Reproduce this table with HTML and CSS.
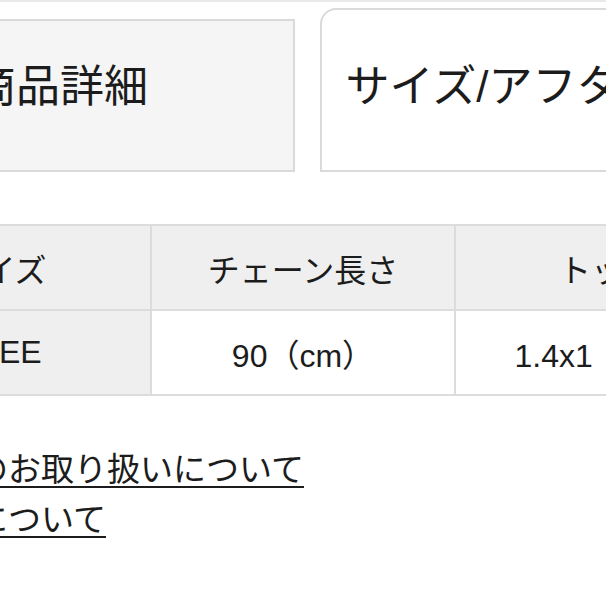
FILE: index.html
```html
<!DOCTYPE html>
<html lang="ja">
<head>
<meta charset="utf-8">
<title>サイズ/アフターケア</title>
<link rel="stylesheet" href="styles.css">
</head>
<body>
<div class="page">
  <div class="tabs">
    <div class="tab tab-inactive">商品詳細</div>
    <div class="tab tab-active">サイズ/アフターケア</div>
  </div>
  <table class="size-table">
    <tr>
      <th class="cell cell-gray">サイズ</th>
      <th class="cell cell-gray">チェーン長さ</th>
      <th class="cell cell-gray">トップ</th>
    </tr>
    <tr>
      <td class="cell cell-gray">FREE</td>
      <td class="cell">90（cm）</td>
      <td class="cell">1.4x1（cm）</td>
    </tr>
  </table>
  <ul class="links">
    <li><a class="link" href="#">商品のお取り扱いについて</a></li>
    <li><a class="link" href="#">返品について</a></li>
  </ul>
</div>
</body>
</html>
```
FILE: styles.css
```css
html, body {
  margin: 0;
  padding: 0;
  background: #ffffff;
  overflow: hidden;
}
body {
  width: 606px;
  height: 606px;
  font-family: "Liberation Sans", "Noto Sans CJK JP", sans-serif;
  color: #1c1c1c;
}
.page {
  width: 1100px;
  margin-left: -154px;
  border-top: 2px solid #e9e9e9;
}
.tabs {
  display: flex;
  align-items: flex-end;
  gap: 25px;
  margin-top: 6px;
  margin-left: -21px;
}
.tab {
  box-sizing: border-box;
  width: 470px;
  border: 2px solid #dadada;
  font-size: 44px;
  line-height: 44px;
  text-align: center;
  white-space: nowrap;
}
.tab-inactive {
  height: 153px;
  padding-top: 44px;
  background: #f5f5f5;
}
.tab-active {
  height: 164px;
  padding-top: 55px;
  padding-right: 12px;
  background: #ffffff;
  border-radius: 16px 16px 0 0;
}
.size-table {
  margin-top: 52px;
  border-collapse: separate;
  border-spacing: 2px;
  background: #dcdcdc;
  table-layout: fixed;
}
.cell {
  box-sizing: border-box;
  width: 302px;
  height: 83px;
  padding: 0;
  font-size: 32px;
  font-weight: normal;
  text-align: center;
  vertical-align: middle;
  background: #ffffff;
  white-space: nowrap;
}
.cell-gray {
  background: #efefef;
}
.links {
  list-style: none;
  margin: 49px 0 0 63px;
  padding: 0;
  font-size: 33px;
  line-height: 50px;
}
.link {
  color: #1c1c1c;
  text-decoration: underline;
  text-decoration-thickness: 2px;
  text-underline-offset: 5px;
}
```
